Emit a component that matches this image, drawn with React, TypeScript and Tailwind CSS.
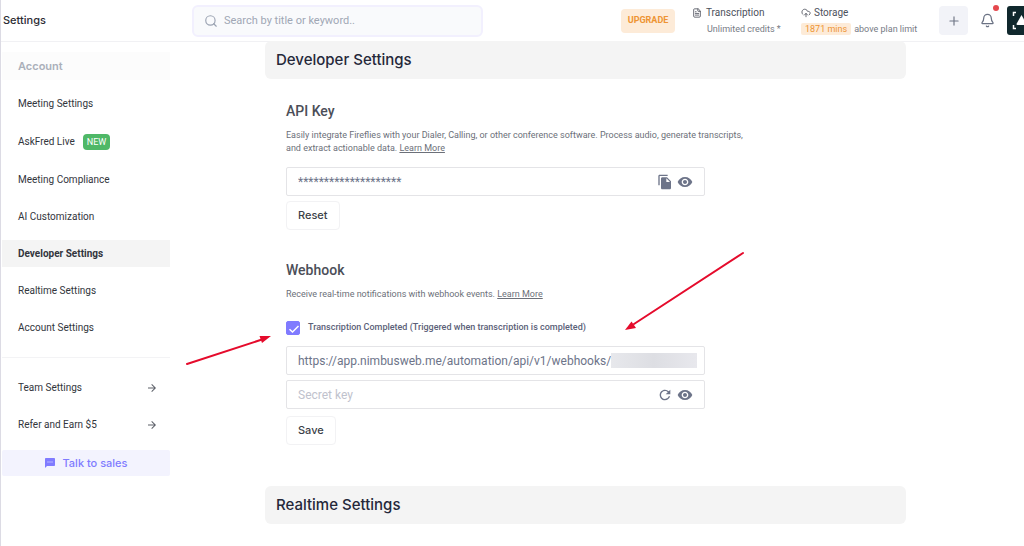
import { useState } from "react";
import { Bell, CloudUpload, FileText, Plus, Search } from "lucide-react";
import { MdArrowForward, MdFileCopy, MdRefresh, MdSms, MdVisibility } from "react-icons/md";

const accountLinks = [
  { label: "Meeting Settings" },
  { label: "AskFred Live", isNew: true },
  { label: "Meeting Compliance" },
  { label: "AI Customization" },
  { label: "Developer Settings", active: true },
  { label: "Realtime Settings" },
  { label: "Account Settings" },
];

const moreLinks = ["Team Settings", "Refer and Earn $5"];

function Header() {
  return (
    <header className="flex h-[42px] shrink-0 items-center overflow-hidden border-b border-[#f1f1f4] bg-white">
      <h1 className="w-[189px] shrink-0 pl-0.5 font-[Inter,sans-serif] text-[11px] font-medium text-[#2c2c34]">
        Settings
      </h1>
      <label className="ml-0.5 flex h-8 w-[291px] items-center gap-1.5 rounded-md border-2 border-[#f2f0fe] bg-[#f9fafc] px-2.5">
        <Search className="size-3.5 shrink-0 text-[#9ba3b2]" strokeWidth={2} />
        <input
          type="search"
          aria-label="Search"
          placeholder="Search by title or keyword.."
          className="min-w-0 flex-1 bg-transparent text-[11px] leading-4 outline-none placeholder:text-[#a0a7b5]"
        />
      </label>
      <div className="ml-auto flex shrink-0 items-center">
        <button className="h-6 w-[54px] rounded-sm bg-[#fdebd8] text-[9px] font-bold text-[#ee9433]">
          UPGRADE
        </button>
        <div className="ml-[17px] w-[109px] text-[#4d515c]">
          <p className="flex items-center gap-1 text-[10px] leading-4">
            <FileText className="size-2.5" strokeWidth={2} />
            Transcription
          </p>
          <p className="pl-[15px] text-[9px] leading-4 text-[#777b85]">Unlimited credits *</p>
        </div>
        <div className="w-[138px] text-[#4d515c]">
          <p className="flex items-center gap-[3px] text-[10px] leading-4">
            <CloudUpload className="size-2.5" strokeWidth={2} />
            Storage
          </p>
          <p className="flex items-center gap-[3px] text-[9px] leading-4 text-[#777b85]">
            <span className="rounded-xs bg-[#fdebd8] px-1 leading-3 text-[#ee9433]">1871 mins</span>
            above plan limit
          </p>
        </div>
        <button aria-label="Add" className="grid h-[29px] w-[29px] place-items-center rounded-sm bg-[#f2f3f8] text-[#6f7686]">
          <Plus className="size-3.5" strokeWidth={2} />
        </button>
        <button aria-label="Notifications" className="relative ml-3 text-[#6b7284]">
          <Bell className="size-[15px]" strokeWidth={2} />
          <span className="absolute -top-2 -right-1 size-1.5 rounded-full bg-[#e5484d]" />
        </button>
        <button aria-label="Profile" className="ml-3 w-[17px] overflow-hidden">
          <svg viewBox="0 0 29 29" className="h-[29px] w-[29px]">
            <rect width="29" height="29" rx="3" fill="#10282d" />
            <path d="M9 6.500H6.500V10M9 22.500H6.500V19" fill="none" stroke="#fff" strokeWidth="1.500" />
            <path d="M14.500 9 L20 19H10.500Q9 19 9.700 17.500Z" fill="#fff" />
          </svg>
        </button>
      </div>
    </header>
  );
}

function Sidebar() {
  return (
    <nav className="flex w-[169px] shrink-0 flex-col pt-2.5 pl-px text-[10px] text-[#32353c]">
      <h2 className="h-7 bg-[#fcfcfc] pl-4 font-[Inter,sans-serif] text-[11px] font-semibold leading-7 text-[#abb0ba]">
        Account
      </h2>
      <ul className="mt-2.5 flex flex-col gap-2.5">
        {accountLinks.map(({ label, isNew, active }) => (
          <li key={label}>
            <a
              href="#"
              className={
                active
                  ? "flex h-[27px] items-center bg-[#f4f4f4] pl-4 font-bold"
                  : isNew
                    ? "flex h-[29px] items-center gap-2 pl-4"
                    : "flex h-[27px] items-center pl-4"
              }
            >
              {label}
              {isNew && (
                <span className="rounded-sm bg-[#4fb867] px-1 text-[9px] leading-4 text-white">NEW</span>
              )}
            </a>
          </li>
        ))}
      </ul>
      <ul className="mt-4 flex flex-col gap-2.5 border-t border-[#f3f3f5] pt-4">
        {moreLinks.map((label) => (
          <li key={label}>
            <a href="#" className="flex h-[27px] items-center justify-between pr-3 pl-4">
              {label}
              <MdArrowForward className="size-3 text-[#5d6069]" />
            </a>
          </li>
        ))}
      </ul>
      <button className="mt-3 flex h-[26px] items-center justify-center gap-1.5 rounded-xs bg-[#f3f3fe] font-[Inter,sans-serif] text-[11px] font-medium text-[#807bff]">
        <MdSms className="size-3" />
        Talk to sales
      </button>
    </nav>
  );
}

function PanelTitle({ children }: { children: string }) {
  return (
    <h2 className="h-[38px] rounded-md bg-[#f4f4f4] px-[11px] font-[Inter,sans-serif] text-[15px] font-medium leading-[38px] text-[#25283a]">
      {children}
    </h2>
  );
}

const fieldClass =
  "flex h-[29px] w-full max-w-[419px] items-center rounded-xs border border-[#e4e4e7] px-[11px] text-[#6d7489]";
const buttonClass =
  "block h-[29px] rounded-sm border border-[#f2f2f4] px-[11px] font-[Inter,sans-serif] text-[11px] font-medium text-[#3c3f48]";

function Arrows() {
  return (
    <svg
      aria-hidden="true"
      viewBox="0 0 570 130"
      className="pointer-events-none absolute -top-3 -left-[85px] h-[130px] w-[570px]"
      fill="#e50b2c"
    >
      <g stroke="#e50b2c" strokeWidth="2" strokeLinecap="round">
        <path d="M7 116L82 91.500" />
        <path d="M563 5L454 76" />
      </g>
      <path d="M91 88L82 95L79.500 88Z" />
      <path d="M445 82L451.500 73.500L456 80Z" />
    </svg>
  );
}

export default function App() {
  const [url, setUrl] = useState("https://app.nimbusweb.me/automation/api/v1/webhooks/");
  const [enabled, setEnabled] = useState(true);

  return (
    <div className="flex min-h-screen flex-col border-l border-[#dcdbe4] bg-white font-[Roboto,sans-serif]">
      <Header />
      <div className="flex flex-1">
        <Sidebar />
        <main className="-mt-px min-w-0 flex-1 pr-[118px] pl-[95px]">
          <PanelTitle>Developer Settings</PanelTitle>

          <section className="mt-[22px] px-[21px]">
            <h3 className="text-[14px] font-medium leading-5 text-[#4b4e58]">API Key</h3>
            <p className="mt-2 max-w-[472px] text-[9px] leading-[13px] text-[#6c7079]">
              Easily integrate Fireflies with your Dialer, Calling, or other conference software. Process audio,
              generate transcripts, and extract actionable data.{" "}
              <a href="#" className="underline">Learn More</a>
            </p>
            <div className={fieldClass + " mt-3"}>
              <input
                aria-label="API key"
                readOnly
                value="********************"
                className="min-w-0 flex-1 bg-transparent text-[12px] outline-none"
              />
              <button aria-label="Copy API key">
                <MdFileCopy className="size-4" />
              </button>
              <button aria-label="Show API key" className="ml-1">
                <MdVisibility className="size-4" />
              </button>
            </div>
            <button className={buttonClass + " mt-[5px]"}>Reset</button>
          </section>

          <section className="relative mt-[30px] px-[21px]">
            <h3 className="text-[14px] font-medium leading-5 text-[#4b4e58]">Webhook</h3>
            <p className="mt-2 text-[9px] leading-[13px] text-[#6c7079]">
              Receive real-time notifications with webhook events.{" "}
              <a href="#" className="underline">Learn More</a>
            </p>
            <label className="mt-5 flex h-[14px] items-center text-[9px] font-medium text-[#5b6178]">
              <input
                type="checkbox"
                checked={enabled}
                onChange={(e) => setEnabled(e.target.checked)}
                className="peer sr-only"
              />
              <span className="mr-2 grid size-[14px] place-items-center rounded-xs border border-[#807bff] text-transparent peer-checked:bg-[#807bff] peer-checked:text-white">
                <svg viewBox="0 0 14 14" className="size-[14px]" fill="none" stroke="currentColor" strokeWidth="1.500">
                  <path d="M2.500 7.200L5.500 10L11.500 4" />
                </svg>
              </span>
              Transcription Completed (Triggered when transcription is completed)
            </label>
            <div className={fieldClass + " mt-[11px]"}>
              <input
                aria-label="Webhook URL"
                value={url}
                onChange={(e) => setUrl(e.target.value)}
                className="field-sizing-content min-w-0 bg-transparent text-[12px] outline-none"
              />
              <span className="-mr-1 h-[15px] min-w-20 flex-1 bg-linear-to-r from-[#e7e8ec] via-[#dddee3] to-[#e8e8ed]" />
            </div>
            <div className={fieldClass + " mt-[5px]"}>
              <input
                aria-label="Secret key"
                placeholder="Secret key"
                className="min-w-0 flex-1 bg-transparent text-[12px] outline-none placeholder:text-[#bfc2cd]"
              />
              <button aria-label="Regenerate secret key">
                <MdRefresh className="size-4" />
              </button>
              <button aria-label="Show secret key" className="ml-1">
                <MdVisibility className="size-4" />
              </button>
            </div>
            <button className={buttonClass + " mt-[7px]"}>Save</button>
            <Arrows />
          </section>

          <div className="mt-[41px]">
            <PanelTitle>Realtime Settings</PanelTitle>
          </div>
        </main>
      </div>
    </div>
  );
}
